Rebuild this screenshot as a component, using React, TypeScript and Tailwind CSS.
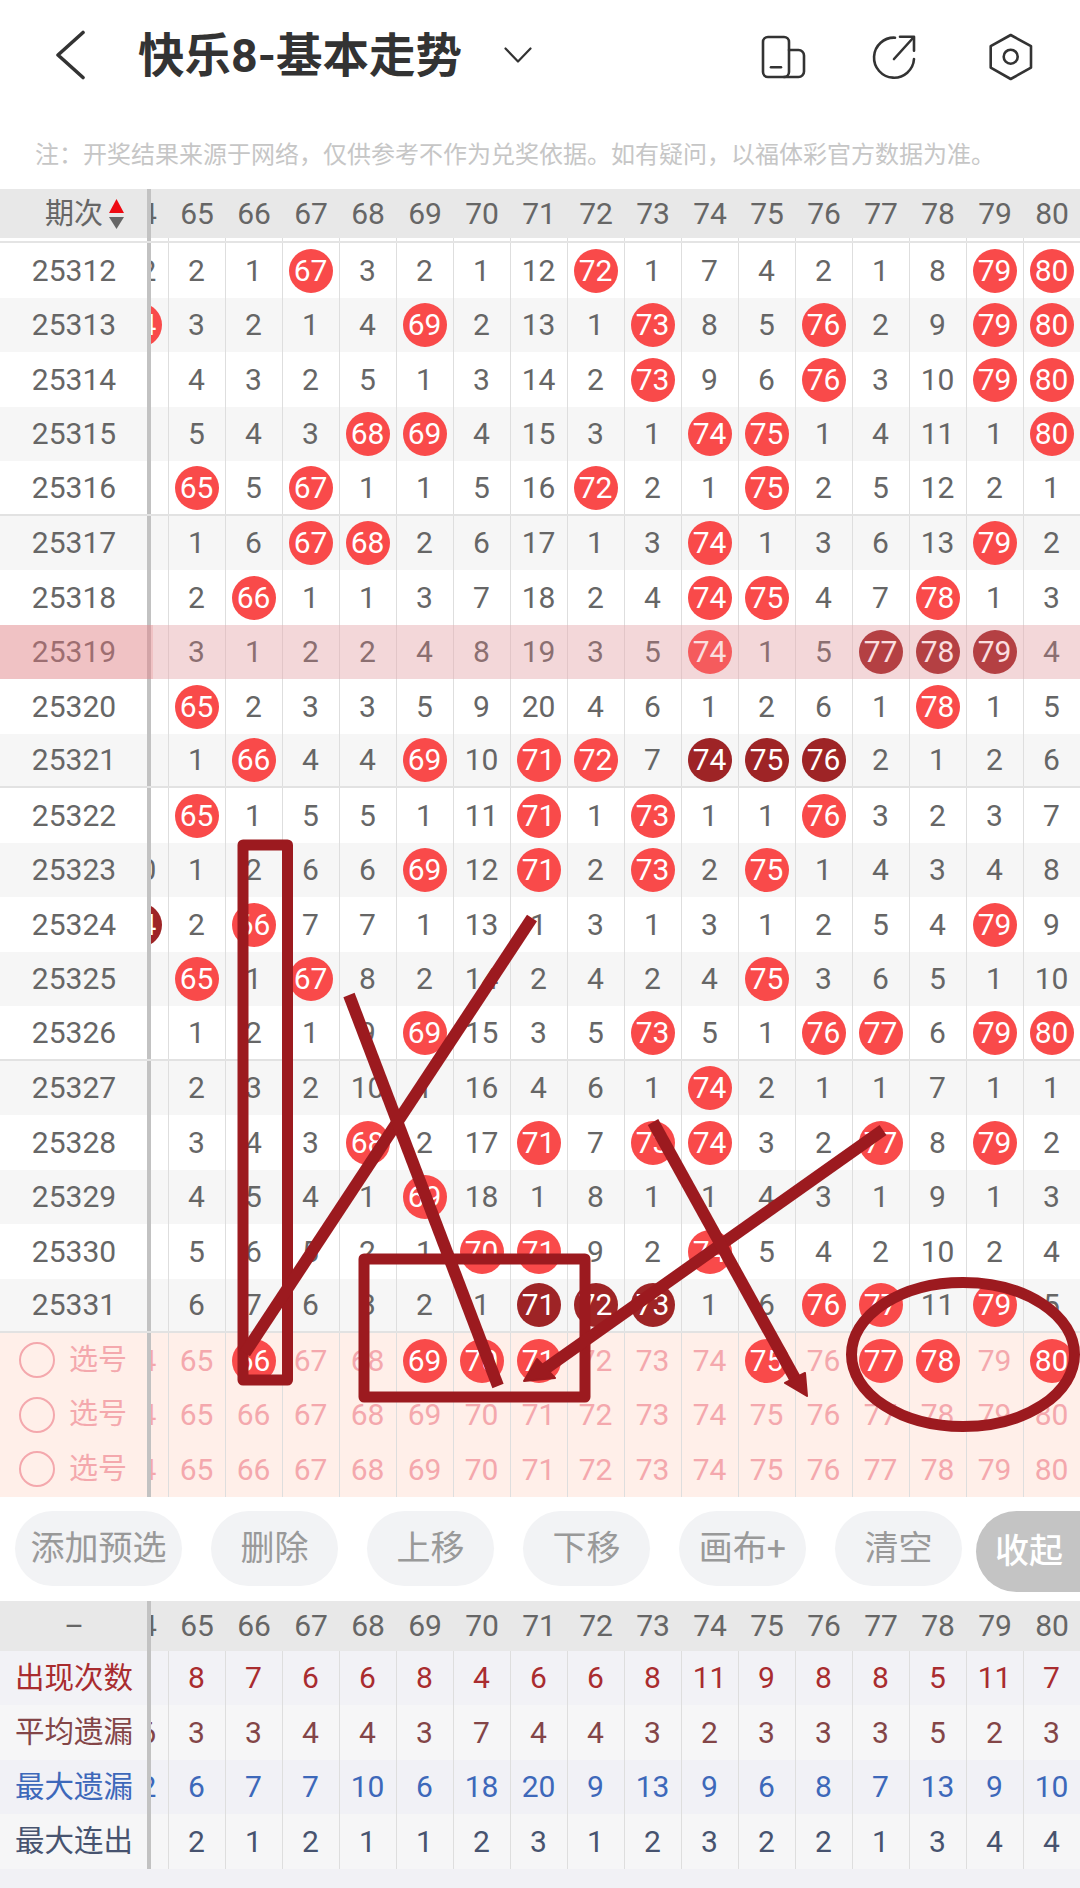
import React from "react";

const COLS = Array.from({ length: 17 }, (_, i) => 64 + i);

const ROWS: [number, number[]][] = [
  [25312, [12, 2, 1, 67, 3, 2, 1, 12, 72, 1, 7, 4, 2, 1, 8, 79, 80]],
  [25313, [64, 3, 2, 1, 4, 69, 2, 13, 1, 73, 8, 5, 76, 2, 9, 79, 80]],
  [25314, [1, 4, 3, 2, 5, 1, 3, 14, 2, 73, 9, 6, 76, 3, 10, 79, 80]],
  [25315, [2, 5, 4, 3, 68, 69, 4, 15, 3, 1, 74, 75, 1, 4, 11, 1, 80]],
  [25316, [3, 65, 5, 67, 1, 1, 5, 16, 72, 2, 1, 75, 2, 5, 12, 2, 1]],
  [25317, [4, 1, 6, 67, 68, 2, 6, 17, 1, 3, 74, 1, 3, 6, 13, 79, 2]],
  [25318, [5, 2, 66, 1, 1, 3, 7, 18, 2, 4, 74, 75, 4, 7, 78, 1, 3]],
  [25319, [6, 3, 1, 2, 2, 4, 8, 19, 3, 5, 74, 1, 5, 77, 78, 79, 4]],
  [25320, [7, 65, 2, 3, 3, 5, 9, 20, 4, 6, 1, 2, 6, 1, 78, 1, 5]],
  [25321, [8, 1, 66, 4, 4, 69, 10, 71, 72, 7, 74, 75, 76, 2, 1, 2, 6]],
  [25322, [9, 65, 1, 5, 5, 1, 11, 71, 1, 73, 1, 1, 76, 3, 2, 3, 7]],
  [25323, [10, 1, 2, 6, 6, 69, 12, 71, 2, 73, 2, 75, 1, 4, 3, 4, 8]],
  [25324, [64, 2, 66, 7, 7, 1, 13, 1, 3, 1, 3, 1, 2, 5, 4, 79, 9]],
  [25325, [1, 65, 1, 67, 8, 2, 14, 2, 4, 2, 4, 75, 3, 6, 5, 1, 10]],
  [25326, [2, 1, 2, 1, 9, 69, 15, 3, 5, 73, 5, 1, 76, 77, 6, 79, 80]],
  [25327, [3, 2, 3, 2, 10, 1, 16, 4, 6, 1, 74, 2, 1, 1, 7, 1, 1]],
  [25328, [4, 3, 4, 3, 68, 2, 17, 71, 7, 73, 74, 3, 2, 77, 8, 79, 2]],
  [25329, [5, 4, 5, 4, 1, 69, 18, 1, 8, 1, 1, 4, 3, 1, 9, 1, 3]],
  [25330, [6, 5, 6, 5, 2, 1, 70, 71, 9, 2, 74, 5, 4, 2, 10, 2, 4]],
  [25331, [7, 6, 7, 6, 3, 2, 1, 71, 72, 73, 1, 6, 76, 77, 11, 79, 5]],
];

const DARK = new Set([
  "25319-77",
  "25319-78",
  "25319-79",
  "25321-74",
  "25321-75",
  "25321-76",
  "25331-71",
  "25331-72",
  "25331-73",
  "25324-64",
]);

const PICKED = new Set([66, 69, 70, 71, 75, 77, 78, 80]);

const STATS: { label: string; text: string; bg: string; vals: number[] }[] = [
  { label: "出现次数", text: "text-[#a92c2f]", bg: "bg-[#f2f2f6]", vals: [8, 8, 7, 6, 6, 8, 4, 6, 6, 8, 11, 9, 8, 8, 5, 11, 7] },
  { label: "平均遗漏", text: "text-[#834547]", bg: "bg-[#f6f6f7]", vals: [16, 3, 3, 4, 4, 3, 7, 4, 4, 3, 2, 3, 3, 3, 5, 2, 3] },
  { label: "最大遗漏", text: "text-[#3d68ba]", bg: "bg-[#f1f1f6]", vals: [12, 6, 7, 7, 10, 6, 18, 20, 9, 13, 9, 6, 8, 7, 13, 9, 10] },
  { label: "最大连出", text: "text-[#47536f]", bg: "bg-[#f6f6f7]", vals: [4, 2, 1, 2, 1, 1, 2, 3, 1, 2, 3, 2, 2, 1, 3, 4, 4] },
];

const BUTTONS: [string, string][] = [
  ["添加预选", "w-[167px]"],
  ["删除", "w-[127px]"],
  ["上移", "w-[127px]"],
  ["下移", "w-[127px]"],
  ["画布+", "w-[127px]"],
  ["清空", "w-[127px]"],
];

const NOTE = "注\uFF1A开奖结果来源于网络\uFF0C仅供参考不作为兑奖依据。如有疑问\uFF0C以福体彩官方数据为准。";

function Divider() {
  return <div className="w-[4px] shrink-0 self-stretch bg-[#c2c2c2]" />;
}

function Strip({ children }: { children: React.ReactNode }) {
  return (
    <div className="min-w-0 flex-1 overflow-hidden">
      <div className="-ml-[39.5px] flex h-full w-[969px]">{children}</div>
    </div>
  );
}

function Cell({ children, line = true }: { children?: React.ReactNode; line?: boolean }) {
  return (
    <div
      className={
        "flex h-full w-[57px] shrink-0 items-center justify-center pt-[1px] " +
        (line ? "border-r-[1.5px] border-[#dedede]" : "")
      }
    >
      {children}
    </div>
  );
}

function Ball({ n, dark }: { n: number; dark?: boolean }) {
  return (
    <span
      className={
        "flex h-11 w-11 items-center justify-center rounded-full text-white " +
        (dark ? "bg-[#9e2426]" : "bg-[#f94a4a]")
      }
    >
      {n}
    </span>
  );
}

function HeaderCols() {
  return (
    <Strip>
      {COLS.map((c) => (
        <Cell key={c} line={false}>
          {c}
        </Cell>
      ))}
    </Strip>
  );
}

function DataRow({ period, vals, idx }: { period: number; vals: number[]; idx: number }) {
  const highlighted = period === 25319;
  return (
    <div
      className={
        "relative flex h-[54.5px] text-[#666666] " +
        (idx % 2 ? "bg-[#f6f6f6] " : "bg-white ") +
        (idx % 5 === 4 ? "border-b-2 border-[#e2e2e2]" : "")
      }
    >
      <div className="flex w-[147px] shrink-0 items-center justify-center pl-[1px] pt-[1px]">{period}</div>
      <Divider />
      <Strip>
        {vals.map((v, i) => (
          <Cell key={i}>{v >= 64 ? <Ball n={v} dark={DARK.has(period + "-" + v)} /> : v}</Cell>
        ))}
      </Strip>
      {highlighted && (
        <>
          <div className="absolute inset-0 bg-[rgba(238,135,145,0.28)]" />
          <div className="absolute inset-y-0 left-0 w-[153px] bg-[rgba(230,110,115,0.2)]" />
        </>
      )}
    </div>
  );
}

function SelectRow({ balls }: { balls: boolean }) {
  return (
    <div className="flex h-[54.5px] bg-[#ffefe9] text-[#f4a8ad]">
      <div className="flex w-[147px] shrink-0 items-center">
        <span className="ml-[19px] h-9 w-9 rounded-full border-2 border-[#f4a8ad]" />
        <span className="ml-[14px] text-[29px] leading-none">选号</span>
      </div>
      <Divider />
      <Strip>
        {COLS.map((c) => (
          <Cell key={c}>{balls && PICKED.has(c) ? <Ball n={c} /> : c}</Cell>
        ))}
      </Strip>
    </div>
  );
}

export default function App() {
  return (
    <div className="relative h-[1888px] w-[1080px] overflow-hidden bg-white font-[Roboto,'Noto_Sans_CJK_SC',sans-serif] text-[30px] leading-none">
      {/* top bar */}
      <div className="flex h-[110px] items-center pl-[55px] pr-[46px]">
        <svg width="30" height="50" viewBox="0 0 30 50" fill="none" stroke="#333" strokeWidth="3.6" strokeLinecap="round" strokeLinejoin="round">
          <path d="M28 2.5 3 25l25 22.5" />
        </svg>
        <div className="ml-[53px] w-[366px] pt-[2px] text-[46.5px] font-bold leading-none text-[#333333]">快乐8-基本走势</div>
        <svg width="28" height="16" viewBox="0 0 28 16" fill="none" stroke="#333" strokeWidth="2.2" strokeLinecap="round" strokeLinejoin="round">
          <path d="M1.5 1.5 14 14.5 26.5 1.5" />
        </svg>
        <svg className="ml-auto mt-1" width="48" height="48" viewBox="0 0 48 48" fill="none" stroke="#333" strokeWidth="2.6" strokeLinecap="round" strokeLinejoin="round">
          <rect x="3" y="4" width="26" height="40" rx="5" />
          <path d="M29 17h9.5a5.5 5.5 0 0 1 5.5 5.5V38.500a5.500 5.500 0 0 1-5.500 5.500H24" />
          <path d="M11 34.300h10" />
        </svg>
        <svg className="ml-[62px] mt-1" width="48" height="48" viewBox="0 0 48 48" fill="none" stroke="#333" strokeWidth="2.6" strokeLinecap="round" strokeLinejoin="round">
          <path d="M25 4.700A20 20 0 1 0 44 26" />
          <path d="M24 26 43 5" />
          <path d="M30 3.700h14v14" />
        </svg>
        <svg className="ml-[68px] mt-1" width="48" height="48" viewBox="0 0 48 48" fill="none" stroke="#333" strokeWidth="2.6" strokeLinecap="round" strokeLinejoin="round">
          <path d="M24.700 2 45 13.200v21.400L24.700 46 4.700 34.600V13.200z" />
          <circle cx="24.700" cy="23.700" r="7" />
        </svg>
      </div>

      {/* note */}
      <div className="flex h-[79px] items-start pl-[35px] pt-[33px] text-[24px] leading-none text-[#c6c6c6]">{NOTE}</div>

      {/* table header */}
      <div className="flex h-[49px] bg-[#e8e8e8] text-[#666666]">
        <div className="flex w-[147px] shrink-0 items-center pl-[45px]">
          <span className="pt-[2px] text-[29px]">期次</span>
          <svg className="ml-[6px]" width="15" height="30" viewBox="0 0 15 30">
            <path d="M7.500 0 15 14H0z" fill="#ee0a12" />
            <path d="M0 18h15l-7.500 12z" fill="#666" />
          </svg>
        </div>
        <Divider />
        <HeaderCols />
      </div>
      <div className="flex h-[5px] border-b-2 border-[#e4e4e4] bg-white">
        <div className="w-[147px] shrink-0" />
        <Divider />
        <Strip>
          {COLS.map((c) => (
            <Cell key={c} />
          ))}
        </Strip>
      </div>

      {/* table rows */}
      {ROWS.map(([p, v], i) => (
        <DataRow key={p} period={p} vals={v} idx={i} />
      ))}
      <SelectRow balls />
      <SelectRow balls={false} />
      <SelectRow balls={false} />

      {/* toolbar */}
      <div className="flex h-[104px] items-start justify-between pl-[15px] pt-[14px]">
        <div className="flex gap-[29px]">
          {BUTTONS.map(([t, w]) => (
            <div key={t} className={"flex h-[75px] items-center justify-center rounded-full bg-[#f2f3f5] text-[34px] text-[#999999] " + w}>
              {t}
            </div>
          ))}
        </div>
        <div className="flex h-[81px] w-[104px] items-center justify-center rounded-l-full bg-[#c4c4c4] pl-[2px] text-[34px] font-medium text-white">
          收起
        </div>
      </div>

      {/* stats */}
      <div className="flex h-[50px] bg-[#e8e8e8] text-[#666666]">
        <div className="flex w-[147px] shrink-0 items-center justify-center pl-[1px]">–</div>
        <Divider />
        <HeaderCols />
      </div>
      {STATS.map((s) => (
        <div key={s.label} className={"flex h-[54.5px] " + s.bg + " " + s.text}>
          <div className="flex w-[147px] shrink-0 items-center justify-center pl-[1px] pt-[1px] text-[29.5px]">{s.label}</div>
          <Divider />
          <Strip>
            {s.vals.map((v, i) => (
              <Cell key={i}>{v}</Cell>
            ))}
          </Strip>
        </div>
      ))}
      <div className="h-[19px] bg-[#f1f1f5]" />

      {/* hand-drawn marks */}
      <svg className="pointer-events-none absolute left-0 top-0" width="1080" height="1888" viewBox="0 0 1080 1888" fill="none" stroke="#9c1a1f" strokeLinejoin="round">
        <rect x="243" y="845" width="44.500" height="535" strokeWidth="11" />
        <rect x="364" y="1259" width="221" height="138" strokeWidth="11" />
        <path d="M532 918 245 1353" strokeWidth="12" />
        <path d="M349 995 498 1386" strokeWidth="12" />
        <path d="M883 1130 545 1369" strokeWidth="12" />
        <path d="M524 1381 537 1359 555 1378z" fill="#9c1a1f" strokeWidth="2" />
        <path d="M653 1122 798 1384" strokeWidth="12" />
        <path d="M807 1396 805 1373 785 1383z" fill="#9c1a1f" strokeWidth="2" />
        <ellipse cx="963" cy="1354.500" rx="111.500" ry="72" strokeWidth="11" />
      </svg>
    </div>
  );
}
